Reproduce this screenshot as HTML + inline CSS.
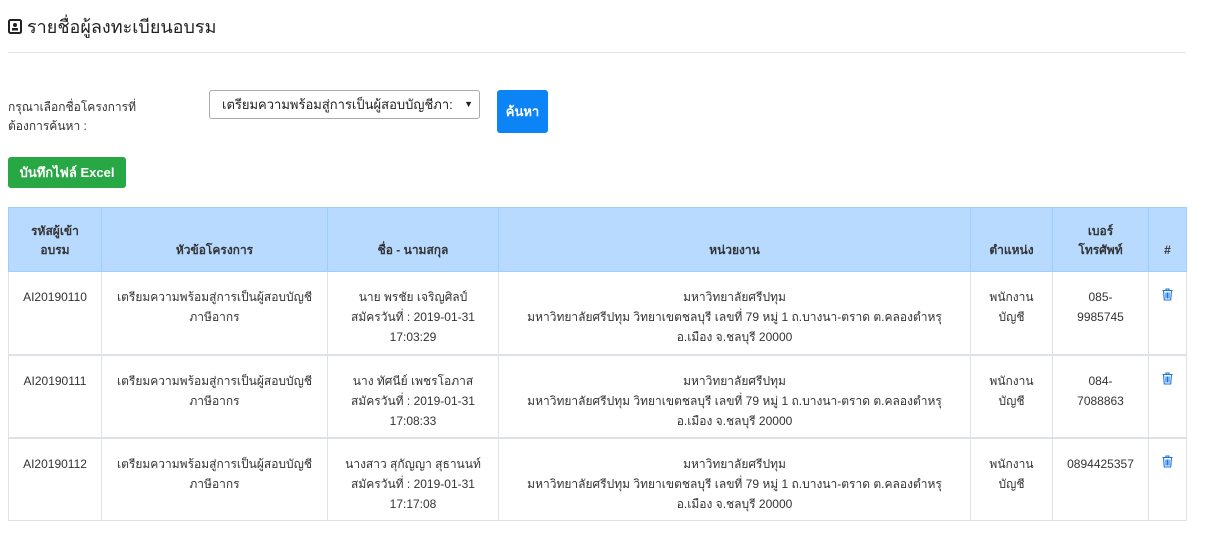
<!DOCTYPE html>
<html><head><meta charset="utf-8"><style>
body{margin:0;background:#fff;font-family:"Liberation Sans","Noto Sans CJK SC",sans-serif;color:#212529;width:1214px;height:557px;overflow:hidden;position:relative}
.abs{position:absolute}
h1{position:absolute;left:8px;top:12px;margin:0;font-size:18px;font-weight:normal;color:#222}
hr{position:absolute;left:8px;top:52px;width:1178px;border:0;border-top:1px solid #e3e3e3;margin:0}
table{position:absolute;left:8px;top:207px;border-collapse:collapse;table-layout:fixed;width:1178px;font-size:12px}
th{background:#b8daff;border:1px solid #9fcdff;font-weight:bold;color:#333;height:64px;box-sizing:border-box;padding:0 6px 11px;text-align:center;vertical-align:bottom;line-height:19px}
td{border:1px solid #dee2e6;height:83px;vertical-align:top;text-align:center;padding:15px 6px 0;line-height:20px;color:#333;box-sizing:border-box}
tr.r td{border-top:2px solid #dee2e6}
</style></head><body>
<h1><svg width="14" height="15" viewBox="0 0 14 15" style="vertical-align:-1px"><rect x="1" y="1" width="12" height="13" rx="1.5" fill="none" stroke="#222" stroke-width="2"/><circle cx="7" cy="6" r="2" fill="#222"/><rect x="4" y="9" width="6" height="2.5" fill="#222"/></svg> รายชื่อผู้ลงทะเบียนอบรม</h1>
<hr>
<div class="abs" style="left:8px;top:98px;font-size:12px;line-height:19px;color:#333">กรุณาเลือกชื่อโครงการที่<br>ต้องการค้นหา :</div>
<div class="abs" style="left:209px;top:90px;width:271px;height:29px;border:1px solid #aaa;border-radius:3px;box-sizing:border-box;font-size:13px;line-height:27px;padding-left:12px;color:#222;white-space:nowrap;overflow:hidden">เตรียมความพร้อมสู่การเป็นผู้สอบบัญชีภา:<span style="position:absolute;right:6px;font-size:9px">▼</span></div>
<div class="abs" style="left:497px;top:90px;width:51px;height:43px;background:#0d84f5;border-radius:3px;color:#fff;font-size:13px;font-weight:bold;text-align:center;line-height:43px">ค้นหา</div>
<div class="abs" style="left:8px;top:157px;width:118px;height:31px;background:#28a745;border-radius:3px;color:#fff;font-size:13px;font-weight:bold;text-align:center;line-height:31px">บันทึกไฟล์ Excel</div>
<table>
<colgroup><col style="width:93px"><col style="width:226px"><col style="width:171px"><col style="width:472px"><col style="width:82px"><col style="width:96px"><col style="width:38px"></colgroup>
<tr><th>รหัสผู้เข้า<br>อบรม</th><th>หัวข้อโครงการ</th><th>ชื่อ - นามสกุล</th><th>หน่วยงาน</th><th>ตำแหน่ง</th><th>เบอร์<br>โทรศัพท์</th><th>#</th></tr>
<tr><td>AI20190110</td><td>เตรียมความพร้อมสู่การเป็นผู้สอบบัญชี<br>ภาษีอากร</td><td>นาย พรชัย เจริญศิลป์<br>สมัครวันที่ : 2019-01-31<br>17:03:29</td><td>มหาวิทยาลัยศรีปทุม<br>มหาวิทยาลัยศรีปทุม วิทยาเขตชลบุรี เลขที่ 79 หมู่ 1 ถ.บางนา-ตราด ต.คลองตำหรุ<br>อ.เมือง จ.ชลบุรี 20000</td><td>พนักงาน<br>บัญชี</td><td>085-<br>9985745</td><td class="t"><svg width="11" height="13" viewBox="0 0 11 13"><path d="M0.5 2.5h10M4 2.5V1h3v1.5M1.5 2.5l.8 9.5h6.4l.8-9.5M4 4.5v6M5.5 4.5v6M7 4.5v6" fill="none" stroke="#1a73e8" stroke-width="1.1"/></svg></td></tr>
<tr class="r"><td>AI20190111</td><td>เตรียมความพร้อมสู่การเป็นผู้สอบบัญชี<br>ภาษีอากร</td><td>นาง ทัศนีย์ เพชรโอภาส<br>สมัครวันที่ : 2019-01-31<br>17:08:33</td><td>มหาวิทยาลัยศรีปทุม<br>มหาวิทยาลัยศรีปทุม วิทยาเขตชลบุรี เลขที่ 79 หมู่ 1 ถ.บางนา-ตราด ต.คลองตำหรุ<br>อ.เมือง จ.ชลบุรี 20000</td><td>พนักงาน<br>บัญชี</td><td>084-<br>7088863</td><td><svg width="11" height="13" viewBox="0 0 11 13"><path d="M0.5 2.5h10M4 2.5V1h3v1.5M1.5 2.5l.8 9.5h6.4l.8-9.5M4 4.5v6M5.5 4.5v6M7 4.5v6" fill="none" stroke="#1a73e8" stroke-width="1.1"/></svg></td></tr>
<tr class="r"><td>AI20190112</td><td>เตรียมความพร้อมสู่การเป็นผู้สอบบัญชี<br>ภาษีอากร</td><td>นางสาว สุกัญญา สุธานนท์<br>สมัครวันที่ : 2019-01-31<br>17:17:08</td><td>มหาวิทยาลัยศรีปทุม<br>มหาวิทยาลัยศรีปทุม วิทยาเขตชลบุรี เลขที่ 79 หมู่ 1 ถ.บางนา-ตราด ต.คลองตำหรุ<br>อ.เมือง จ.ชลบุรี 20000</td><td>พนักงาน<br>บัญชี</td><td>0894425357</td><td><svg width="11" height="13" viewBox="0 0 11 13"><path d="M0.5 2.5h10M4 2.5V1h3v1.5M1.5 2.5l.8 9.5h6.4l.8-9.5M4 4.5v6M5.5 4.5v6M7 4.5v6" fill="none" stroke="#1a73e8" stroke-width="1.1"/></svg></td></tr>
</table>
</body></html>
